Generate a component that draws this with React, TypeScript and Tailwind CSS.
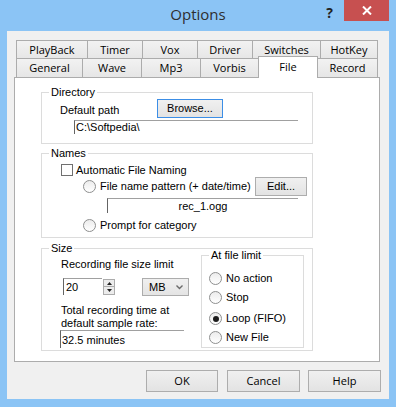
import React from 'react';

const ui = "font-['Open_Sans',sans-serif]";
const sys = "font-['Liberation_Sans',Arial,sans-serif] text-[11px] leading-[13px] text-black";

const row1 = [
  { label: 'PlayBack', w: 71 },
  { label: 'Timer', w: 55 },
  { label: 'Vox', w: 55 },
  { label: 'Driver', w: 55 },
  { label: 'Switches', w: 68 },
  { label: 'HotKey', w: 58 },
];

const row2 = [
  { label: 'General', w: 66 },
  { label: 'Wave', w: 59 },
  { label: 'Mp3', w: 59 },
  { label: 'Vorbis', w: 58 },
  { label: 'File', w: 60, active: true },
  { label: 'Record', w: 60 },
];

const Radio: React.FC<{ checked?: boolean }> = ({ checked }) => (
  <span className="w-[13px] h-[13px] rounded-full border border-[#8e8f8f] bg-linear-to-b from-[#ececec] to-white flex items-center justify-center shrink-0">
    {checked && <span className="w-[6px] h-[6px] rounded-full bg-[#1c1c1c]" />}
  </span>
);

const Group: React.FC<{ label: string; className: string; children?: React.ReactNode }> = ({ label, className, children }) => (
  <div className={`relative border border-[#dcdcdc] ${className}`}>
    <span className="absolute -top-[7px] left-[7px] px-[2px] bg-white">{label}</span>
    {children}
  </div>
);

const SysButton: React.FC<{ label: string; className: string; focused?: boolean }> = ({ label, className, focused }) => (
  <div
    className={`flex items-center justify-center border bg-linear-to-b from-[#f0f0f0] to-[#e3e3e3] ${
      focused ? 'border-[#3c8ee6]' : 'border-[#adadad]'
    } ${className}`}
  >
    {label}
  </div>
);

export default function App() {
  return (
    <div className="w-[396px] h-[407px] bg-[#8bc4f5] flex flex-col overflow-hidden">
      {/* Title bar */}
      <div className={`h-[31px] grid grid-cols-[1fr_auto_1fr] ${ui}`}>
        <div />
        <div className="pt-[3px] text-[15px] leading-[22px] text-[#2e2e2e]">Options</div>
        <div className="flex justify-end items-start pr-[7px]">
          <span className="mt-[4px] mr-[11px] text-[14px] font-bold leading-[18px] text-[#222]">?</span>
          <div className="w-[45px] h-[21px] bg-[#c75050] flex items-center justify-center">
            <svg width="10" height="9" viewBox="0 0 10 9">
              <path d="M1 0.5 L9 8.5 M9 0.5 L1 8.5" stroke="white" strokeWidth="2" />
            </svg>
          </div>
        </div>
      </div>

      {/* Client */}
      <div className="mx-[7px] mb-[8px] flex-1 bg-[#f0f0f0] pt-[9px] pl-[7px] flex flex-col">
        {/* Tabs */}
        <div className={`pl-[2px] text-[11px] text-black ${ui}`}>
          <div className="flex h-[18px]">
            {row1.map((t, i) => (
              <div
                key={t.label}
                style={{ width: t.w }}
                className={`h-[19px] border-t border-l border-[#acacac] bg-linear-to-b from-[#f2f2f2] to-[#e6e6e6] flex items-center justify-center leading-[16px] ${
                  i === row1.length - 1 ? 'border-r' : ''
                }`}
              >
                {t.label}
              </div>
            ))}
          </div>
          <div className="flex h-[19px] items-end">
            {row2.map((t, i) =>
              t.active ? (
                <div
                  key={t.label}
                  style={{ width: t.w }}
                  className="relative z-10 h-[22px] -mb-px bg-white border-t border-l border-r border-[#acacac] flex justify-center pt-[2px] leading-[16px]"
                >
                  {t.label}
                </div>
              ) : (
                <div
                  key={t.label}
                  style={{ width: t.w }}
                  className={`h-[19px] border-t border-[#acacac] bg-linear-to-b from-[#f2f2f2] to-[#e6e6e6] flex items-center justify-center leading-[16px] ${
                    i === row2.length - 1 ? 'border-r' : ''
                  } ${i > 0 && row2[i - 1].active ? '' : 'border-l'}`}
                >
                  {t.label}
                </div>
              )
            )}
          </div>
        </div>

        {/* Panel */}
        <div className={`w-[366px] h-[285px] bg-white border border-[#acacac] pl-[26px] pt-[14px] flex flex-col ${sys}`}>
          <Group label="Directory" className="w-[272px] h-[52px]">
            <div className="flex mt-[6px]">
              <span className="ml-[18px] w-[97px] pt-[5px]">Default path</span>
              <SysButton label="Browse..." focused className="w-[66px] h-[19px]" />
            </div>
            <div className="ml-[32px] mt-[2px] w-[224px] h-[14px] border-t border-l border-t-[#a0a0a0] border-l-[#646464] pl-[1px]">
              C:\Softpedia\
            </div>
          </Group>

          <Group label="Names" className="w-[272px] h-[85px] mt-[9px]">
            <div className="flex items-center ml-[19px] mt-[10px] h-[12px] gap-[3px]">
              <span className="w-[12px] h-[12px] border border-[#707070] bg-white" />
              <span>Automatic File Naming</span>
            </div>
            <div className="flex items-center h-[19px] mt-[1px] ml-[41px] mr-[5px]">
              <Radio />
              <span className="ml-[4px]">File name pattern (+ date/time)</span>
              <SysButton label="Edit..." className="ml-auto w-[52px] h-[19px]" />
            </div>
            <div className="ml-[65px] mt-[2px] w-[191px] h-[15px] border-t border-l border-t-[#a0a0a0] border-l-[#646464] text-center leading-[14px]">
              rec_1.ogg
            </div>
            <div className="flex items-center ml-[41px] mt-[6px] h-[13px]">
              <Radio />
              <span className="ml-[4px]">Prompt for category</span>
            </div>
          </Group>

          <Group label="Size" className="w-[272px] h-[103px] mt-[10px] flex">
            <div className="ml-[19px] w-[140px] flex flex-col">
              <span className="mt-[9px]">Recording file size limit</span>
              <div className="flex mt-[7px] ml-[2px] items-start">
                <div className="w-[39px] h-[17px] border-t border-l border-t-[#a0a0a0] border-l-[#646464] pl-[2px] pt-[2px]">20</div>
                <div className="ml-[1px] mt-[1px] w-[12px] h-[16px] flex flex-col">
                  <div className="h-[8px] border border-[#acacac] bg-[#ececec] flex items-center justify-center">
                    <svg width="5" height="3" viewBox="0 0 5 3"><path d="M2.5 0 L5 3 L0 3 Z" fill="#222" /></svg>
                  </div>
                  <div className="h-[8px] border border-t-0 border-[#acacac] bg-[#ececec] flex items-center justify-center">
                    <svg width="5" height="3" viewBox="0 0 5 3"><path d="M0 0 L5 0 L2.5 3 Z" fill="#222" /></svg>
                  </div>
                </div>
                <div className="ml-[27px] w-[47px] h-[18px] border border-[#acacac] bg-linear-to-b from-[#f0f0f0] to-[#e4e4e4] flex items-center pl-[6px] pr-[5px]">
                  <span>MB</span>
                  <svg className="ml-auto" width="7" height="5" viewBox="0 0 7 5">
                    <path d="M0.5 0.5 L3.5 3.5 L6.5 0.5" stroke="#6b6b6b" strokeWidth="1.4" fill="none" />
                  </svg>
                </div>
              </div>
              <span className="mt-[8px]">Total recording time at</span>
              <span>default sample rate:</span>
              <div className="-ml-px w-[124px] h-[18px] border-t border-l border-t-[#a0a0a0] border-l-[#646464] pl-[1px] pt-[3px]">
                32.5 minutes
              </div>
            </div>
            <Group label="At file limit" className="w-[103px] h-[93px] mt-[6px] flex flex-col pl-[7px]">
              <div className="flex items-center mt-[16px] h-[13px]">
                <Radio />
                <span className="ml-[4px]">No action</span>
              </div>
              <div className="flex items-center mt-[6px] h-[13px]">
                <Radio />
                <span className="ml-[4px]">Stop</span>
              </div>
              <div className="flex items-center mt-[8px] h-[13px]">
                <Radio checked />
                <span className="ml-[4px]">Loop (FIFO)</span>
              </div>
              <div className="flex items-center mt-[6px] h-[13px]">
                <Radio />
                <span className="ml-[4px]">New File</span>
              </div>
            </Group>
          </Group>
        </div>

        {/* Dialog buttons */}
        <div className={`flex justify-end mt-[8px] pr-[8px] text-[11px] text-black ${ui}`}>
          <SysButton label="OK" className="w-[72px] h-[22px] bg-[#e1e1e1]" />
          <SysButton label="Cancel" className="ml-[9px] w-[73px] h-[22px]" />
          <SysButton label="Help" className="ml-[8px] w-[73px] h-[22px]" />
        </div>
      </div>
    </div>
  );
}
